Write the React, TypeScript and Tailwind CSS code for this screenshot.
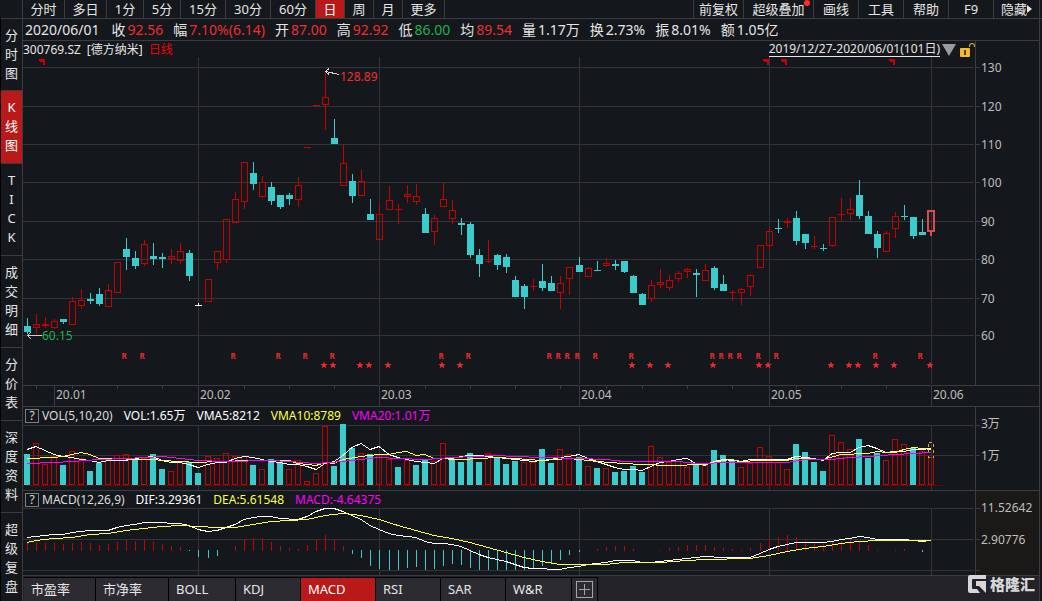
import { clsx } from 'clsx';

const PERIODS = [
  { label: '分时', width: 'w-[42px]' },
  { label: '多日', width: 'w-[42px]' },
  { label: '1分', width: 'w-[37px]' },
  { label: '5分', width: 'w-[37px]' },
  { label: '15分', width: 'w-[45px]' },
  { label: '30分', width: 'w-[45px]' },
  { label: '60分', width: 'w-[45px]' },
  { label: '日', width: 'w-[29px]' },
  { label: '周', width: 'w-[29px]' },
  { label: '月', width: 'w-[29px]' },
  { label: '更多', width: 'w-[42px]' },
];

const TOOLS = [
  { label: '前复权', width: 'w-[50px]' },
  { label: '超级叠加', width: 'w-[70px]', dot: true },
  { label: '画线', width: 'w-[45px]' },
  { label: '工具', width: 'w-[45px]' },
  { label: '帮助', width: 'w-[45px]' },
  { label: 'F9', width: 'w-[45px]' },
  { label: '隐藏', width: 'w-[46px]', arrow: true },
];

const SIDE_TABS = ['分时图', 'K线图', 'TICK', '成交明细', '分价表', '深度资料', '超级复盘'];

const QUOTE = [
  { label: '收', value: '92.56', color: 'text-[#f02d2d]' },
  { label: '幅', value: '7.10%(6.14)', color: 'text-[#f02d2d]' },
  { label: '开', value: '87.00', color: 'text-[#f02d2d]' },
  { label: '高', value: '92.92', color: 'text-[#f02d2d]' },
  { label: '低', value: '86.00', color: 'text-[#1fb14c]' },
  { label: '均', value: '89.54', color: 'text-[#f02d2d]' },
  { label: '量', value: '1.17万', color: 'text-[#e6e6e6]' },
  { label: '换', value: '2.73%', color: 'text-[#e6e6e6]' },
  { label: '振', value: '8.01%', color: 'text-[#e6e6e6]' },
  { label: '额', value: '1.05亿', color: 'text-[#e6e6e6]' },
];

const INDICATORS = [
  { label: '市盈率', width: 'w-[72px]' },
  { label: '市净率', width: 'w-[73px]' },
  { label: 'BOLL', width: 'w-[67px]' },
  { label: 'KDJ', width: 'w-[65px]' },
  { label: 'MACD', width: 'w-[75px]' },
  { label: 'RSI', width: 'w-[65px]' },
  { label: 'SAR', width: 'w-[65px]' },
  { label: 'W&R', width: 'w-[66px]' },
];

const UP = '#c80000';
const DOWN = '#3acccc';
const GRID = '#333437';
const FRAME = '#3b3c42';
const LABEL = '#bebebe';

// [color, high, body top, body bottom, low]
type Candle = ['r' | 'c' | 'w' | 'b', number, number, number, number];

const CANDLES: Candle[] = [
  ['c', 318, 326, 332, 334], ['r', 314, 324, 328, 334], ['r', 317, 324, 326, 328], ['r', 319, 321, 328, 329],
  ['c', 319, 319, 322, 324], ['r', 297, 301, 325, 325], ['r', 289, 300, 306, 309], ['c', 293, 299, 301, 304],
  ['c', 288, 294, 304, 306], ['r', 284, 290, 307, 307], ['r', 262, 262, 293, 293], ['c', 238, 249, 257, 270],
  ['c', 251, 258, 266, 269], ['r', 240, 244, 264, 266], ['c', 243, 256, 259, 265], ['c', 253, 257, 259, 268],
  ['r', 249, 256, 259, 264], ['r', 243, 251, 261, 264], ['c', 250, 253, 276, 281], ['w', 303, 305, 306, 306],
  ['r', 279, 279, 302, 302], ['r', 251, 251, 263, 270], ['r', 219, 219, 260, 263], ['r', 192, 199, 223, 223],
  ['r', 162, 162, 202, 209], ['c', 162, 173, 184, 190], ['r', 176, 182, 197, 198], ['c', 182, 187, 201, 205],
  ['c', 195, 195, 207, 209], ['c', 193, 195, 199, 205], ['r', 177, 185, 200, 207], ['r', 147, 147, 148, 148],
  ['r', 105, 105, 106, 106], ['r', 72, 97, 105, 130], ['c', 119, 138, 144, 144], ['r', 144, 163, 186, 186],
  ['c', 174, 181, 196, 203], ['r', 170, 181, 196, 196], ['c', 199, 214, 220, 220], ['r', 204, 214, 240, 240],
  ['r', 186, 200, 210, 210], ['r', 204, 209, 210, 224], ['r', 185, 194, 197, 203], ['r', 184, 196, 202, 205],
  ['c', 208, 214, 233, 233], ['r', 215, 218, 232, 245], ['r', 183, 199, 207, 207], ['r', 200, 210, 219, 224],
  ['c', 218, 223, 225, 235], ['c', 222, 224, 255, 258], ['c', 249, 255, 264, 277], ['r', 240, 261, 262, 263],
  ['c', 254, 255, 265, 270], ['c', 254, 257, 267, 273], ['c', 276, 280, 297, 297], ['c', 284, 286, 297, 309],
  ['r', 279, 286, 287, 291], ['c', 264, 281, 288, 291], ['c', 276, 283, 291, 291], ['r', 276, 283, 293, 309],
  ['r', 267, 267, 279, 295], ['c', 257, 265, 272, 272], ['r', 267, 268, 277, 277], ['c', 261, 270, 271, 271],
  ['r', 258, 263, 266, 267], ['c', 260, 264, 266, 270], ['c', 261, 261, 272, 273], ['c', 275, 276, 293, 293],
  ['c', 293, 294, 305, 305], ['r', 280, 285, 299, 302], ['r', 269, 282, 285, 288], ['r', 275, 280, 288, 291],
  ['r', 271, 273, 279, 282], ['r', 268, 269, 272, 278], ['c', 269, 273, 275, 297], ['r', 264, 270, 281, 281],
  ['c', 266, 268, 288, 290], ['c', 275, 284, 291, 291], ['r', 290, 292, 293, 301], ['r', 288, 289, 293, 305],
  ['r', 274, 275, 287, 296], ['r', 245, 245, 268, 268], ['r', 229, 231, 246, 250], ['c', 219, 228, 229, 233],
  ['r', 218, 221, 223, 228], ['c', 211, 218, 241, 245], ['c', 234, 234, 243, 249], ['r', 236, 246, 247, 249],
  ['c', 244, 248, 249, 251], ['r', 217, 217, 246, 247], ['r', 198, 214, 215, 222], ['r', 198, 209, 214, 220],
  ['c', 180, 195, 216, 219], ['c', 211, 216, 234, 234], ['c', 231, 234, 248, 258], ['r', 231, 233, 252, 252],
  ['r', 212, 216, 229, 238], ['c', 205, 216, 217, 220], ['c', 217, 217, 236, 239], ['c', 219, 232, 235, 235],
  ['b', 210, 210, 232, 236],
];

// top edge of each volume bar, negative when the day closed lower
const VOLUMES = [
  -454, 443, 464, 456, -465, 451, 458, -471, -463, 460, 455, 454, -458, 458, -454, -469, 471, 461, -462, -473,
  456, 458, 453, 456, 456, -465, 469, -459, -462, 469, 460, 481, 473, 426, -466, -424, -448, 453, -454, 454,
  459, -467, 460, -465, -460, 461, 443, -459, -462, -453, -462, 453, -458, -464, -461, 462, 462, -449, -463, 449,
  454, -457, 466, -468, 468, -472, -471, -466, -472, 446, 457, 462, 461, 467, -464, 465, -450, -455, -461, 467,
  463, 447, 456, 462, 469, -444, -452, -462, -471, 435, 442, 449, -439, -458, -453, 460, 439, 444, -448, 451,
  457,
];

// histogram heights above and below the zero line
const HISTOGRAM = [
  8, 9, 8, 8, 7, 8, 9, 8, 6, 7, 9, 11, 10, 11, 9, 7, 5, 4, -1, -7,
  -8, -6, 0, 5, 12, 13, 13, 9, 5, 3, 2, 6, 12, 16, 11, 5, -4, -8, -16, -19,
  -20, -20, -18, -17, -20, -19, -16, -14, -15, -18, -20, -20, -20, -20, -20, -20, -18, -16, -13, -10,
  -5, -2, 0, 2, 4, 5, 5, 2, 0, 0, 1, 3, 4, 6, 6, 6, 4, 3, 2, 1,
  3, 8, 12, 14, 16, 14, 12, 9, 7, 9, 10, 11, 9, 6, 1, 0, 1, 2, 0, -2,
  0,
];

const VMA5 =
  '27,449 36,446 45,450 54,454 63,456 72,457 81,459 90,460 99,462 108,460 126,460 135,458 144,457 153,456 162,460 171,462 180,462 189,464 198,467 208,464 217,462 226,462 235,458 244,456 253,457 262,459 271,461 280,462 289,464 298,464 307,466 316,469 325,463 334,461 343,455 352,447 361,443 370,449 379,446 389,454 398,457 407,459 416,461 425,462 434,463 443,458 452,458 461,456 470,455 479,455 488,456 497,457 506,458 515,459 524,460 533,461 542,460 551,459 560,457 569,456 579,454 588,458 597,461 606,464 615,467 624,469 633,469 642,470 651,466 660,462 669,461 678,459 687,458 696,463 705,465 714,461 723,459 732,460 741,461 750,459 787,459 796,456 805,457 814,458 823,460 832,453 841,452 850,452 859,447 868,445 877,448 886,452 895,451 904,451 913,449 922,449 931,448';
const VMA10 =
  '27,458 54,457 63,456 72,454 81,452 90,454 99,458 117,458 135,459 153,459 162,460 198,462 217,461 253,460 289,460 298,463 316,465 325,462 334,463 343,459 361,456 379,454 389,454 398,452 407,451 416,455 425,454 434,458 461,459 497,457 515,458 542,460 569,458 579,459 597,461 624,463 642,464 669,465 705,464 714,462 723,460 732,459 741,461 760,460 787,460 796,458 823,459 841,454 868,453 877,451 886,452 895,452 904,449 913,447 922,448 931,449';
const VMA20 =
  '27,463 54,462 72,461 99,459 126,458 162,456 180,458 198,460 225,461 271,460 289,461 316,463 343,461 361,459 379,457 398,458 425,459 452,457 497,455 515,456 542,457 579,458 606,459 624,461 678,461 696,463 732,462 787,462 805,459 832,459 850,457 868,456 895,454 913,453 931,452';
const DIF =
  '27,537 36,536 45,535 54,534 63,534 72,532 81,531 90,530 108,530 117,527 126,525 135,524 144,522 162,522 171,523 180,523 189,525 198,529 208,531 217,530 226,527 235,524 244,519 253,517 262,516 271,516 280,518 298,519 307,516 316,511 325,508 334,508 343,511 352,515 361,519 370,525 379,529 389,533 398,535 407,536 416,537 425,541 434,543 443,543 452,544 461,546 470,550 479,554 488,557 497,559 506,561 515,564 524,567 533,568 542,568 551,569 560,569 569,567 579,566 588,564 597,563 606,562 615,560 633,560 642,562 651,562 669,560 687,558 705,556 723,557 750,557 760,553 769,549 778,546 787,544 796,542 823,542 832,541 841,539 850,538 859,536 868,537 877,539 904,539 913,540 922,541 931,540';
const DEA =
  '27,542 36,540 54,538 72,537 90,534 108,533 126,530 144,528 162,526 180,525 198,526 217,527 235,527 253,524 271,521 289,520 307,519 325,515 343,513 361,515 379,519 398,525 416,530 434,535 452,538 470,542 488,547 506,552 524,557 542,561 560,564 579,564 606,564 624,562 660,562 687,560 705,559 750,558 769,555 787,551 805,548 823,546 841,543 859,541 877,540 931,540';

const PRICES = [
  { price: 130, y: 67 }, { price: 120, y: 106 }, { price: 110, y: 144 }, { price: 100, y: 182 },
  { price: 90, y: 221 }, { price: 80, y: 259 }, { price: 70, y: 298 }, { price: 60, y: 335 },
];
const MONTHS = [
  { label: '20.01', x: 54 }, { label: '20.02', x: 198 }, { label: '20.03', x: 379 },
  { label: '20.04', x: 579 }, { label: '20.05', x: 769 }, { label: '20.06', x: 931 },
];
const MONTH_LINES = [198, 379, 579, 769, 931];
const TICKS = [36, 72, 117, 162, 244, 289, 334, 425, 470, 515, 560, 606, 642, 687, 732, 796, 841, 886];
const REPORTS = [124, 142, 233, 278, 305, 332, 441, 468, 549, 558, 567, 577, 595, 631, 712, 721, 730, 739, 758, 776, 875, 920];
const STARS = [324, 333, 360, 369, 388, 442, 460, 632, 650, 668, 713, 759, 768, 831, 849, 858, 876, 894, 930];
const FLAGS = [39, 763, 781, 889];

// one day is 9px wide, with a spare pixel every twenty days or so
function dayX(i: number) {
  return 27 + 9 * i + [20, 40, 61, 81].filter((n) => i >= n).length;
}

function Bar({ x, y, w, h, color, hollow }: { x: number; y: number; w: number; h: number; color: string; hollow: boolean }) {
  if (!hollow || h < 3) return <rect x={x} y={y} width={w} height={h} fill={color} />;
  return <rect x={x + 0.5} y={y + 0.5} width={w - 1} height={h - 1} fill="none" stroke={color} />;
}

function PriceChart() {
  return (
    <svg
      className="block h-[350px] w-full"
      viewBox="23 57 1016 350"
      preserveAspectRatio="none"
      shapeRendering="crispEdges"
      role="img"
      aria-label="日线"
    >
      {PRICES.map((p) => (
        <g key={p.price}>
          <rect x={23} y={p.y} width={951} height={1} fill={GRID} />
          <rect x={975} y={p.y} width={5} height={1} fill={FRAME} />
          <text x={981} y={p.y + 5} fontSize={12} fill={LABEL}>
            {p.price}
          </text>
        </g>
      ))}
      {MONTH_LINES.map((x) => (
        <rect key={x} x={x} y={57} width={1} height={327} fill={GRID} />
      ))}
      <rect x={975} y={57} width={1} height={328} fill={FRAME} />
      <rect x={23} y={385} width={1016} height={1} fill={FRAME} />
      <rect x={23} y={406} width={1016} height={1} fill={FRAME} />
      {TICKS.map((x) => (
        <rect key={x} x={x} y={386} width={1} height={3} fill={FRAME} />
      ))}
      {MONTHS.map((m) => (
        <g key={m.label}>
          <rect x={m.x} y={386} width={1} height={20} fill={FRAME} />
          <text x={m.x + 2} y={399} fontSize={12} fill={LABEL}>
            {m.label}
          </text>
        </g>
      ))}

      {CANDLES.map(([kind, high, top, bottom, low], i) => {
        const x = dayX(i);
        if (kind === 'b') {
          return (
            <g key={i}>
              <rect x={x - 3} y={top + 1} width={6} height={bottom - top - 2} fill="none" stroke="#dc4b4b" strokeWidth={2} />
              <rect x={x - 1} y={bottom} width={2} height={low - bottom} fill="#dc4b4b" />
            </g>
          );
        }
        const color = kind === 'r' ? UP : kind === 'c' ? DOWN : '#ffffff';
        return (
          <g key={i}>
            <rect x={x} y={high} width={1} height={top - high} fill={color} />
            <Bar x={x - 3} y={top} w={7} h={bottom - top} color={color} hollow={kind === 'r'} />
            <rect x={x} y={bottom} width={1} height={low - bottom} fill={color} />
          </g>
        );
      })}

      {FLAGS.map((x) => (
        <path key={x} d={`M${x} 59h6v6h-2v-3h-2l-2-1z`} fill={UP} />
      ))}
      {REPORTS.map((x) => (
        <text key={x} x={x} y={359} fontSize={8} fontWeight={700} textAnchor="middle" fill="#f0282d">
          R
        </text>
      ))}
      {STARS.map((x) => (
        <path
          key={x}
          transform={`translate(${x} 365)`}
          d="M0-3.6 1-1.1 3.6-1 1.6.7 2.4 3.3 0 1.8-2.4 3.3-1.6.7-3.6-1-1-1.1z"
          fill="#f0282d"
          shapeRendering="auto"
        />
      ))}

      <path d="M339 74.500 326 71.500M329 68.500 325.500 71.500 329 74.500" fill="none" stroke="#d2d2d2" />
      <text x={340} y={81} fontSize={12} fill="#f02d2d">
        128.89
      </text>
      <path d="M42 335.500H28M31 332 27.500 335.500 31 339" fill="none" stroke="#d2d2d2" />
      <text x={42} y={340} fontSize={12} fill="#1fb14c">
        60.15
      </text>
    </svg>
  );
}

function VolumeChart() {
  return (
    <svg
      className="block h-[67px] w-full"
      viewBox="23 424 1016 67"
      preserveAspectRatio="none"
      shapeRendering="crispEdges"
      role="img"
      aria-label="VOL"
    >
      {[425, 455].map((y) => (
        <g key={y}>
          <rect x={23} y={y} width={951} height={1} fill={GRID} />
          <rect x={975} y={y} width={5} height={1} fill={FRAME} />
        </g>
      ))}
      {MONTH_LINES.map((x) => (
        <rect key={x} x={x} y={425} width={1} height={65} fill={GRID} />
      ))}
      <rect x={975} y={424} width={1} height={66} fill={FRAME} />
      <rect x={23} y={490} width={1016} height={1} fill={FRAME} />
      <text x={981} y={460} fontSize={12} fill={LABEL}>
        1万
      </text>
      {VOLUMES.map((v, i) => (
        <Bar
          key={i}
          x={dayX(i) - 3}
          y={Math.abs(v)}
          w={6}
          h={485 - Math.abs(v)}
          color={v > 0 ? UP : DOWN}
          hollow={v > 0}
        />
      ))}
      <path d="M23 485.500H944" stroke="#a00000" strokeDasharray="1 1" />
      <rect x={928.5} y={442.5} width={5} height={15} fill="none" stroke="#e6aa1e" strokeDasharray="3 3" />
      <g fill="none" transform="translate(0 .5)">
        <polyline points={VMA5} stroke="#ffffff" />
        <polyline points={VMA10} stroke="#ffff46" />
        <polyline points={VMA20} stroke="#ff00ff" />
      </g>
    </svg>
  );
}

function MacdChart() {
  return (
    <svg
      className="block h-[68px] w-full"
      viewBox="23 508 1016 68"
      preserveAspectRatio="none"
      shapeRendering="crispEdges"
      role="img"
      aria-label="MACD"
    >
      <rect x={976} y={508} width={63} height={67} fill="#1b1918" />
      {[508, 539, 570].map((y) => (
        <g key={y}>
          <rect x={23} y={y} width={951} height={1} fill={GRID} />
          <rect x={975} y={y} width={5} height={1} fill={FRAME} />
        </g>
      ))}
      {MONTH_LINES.map((x) => (
        <rect key={x} x={x} y={508} width={1} height={67} fill={GRID} />
      ))}
      <rect x={975} y={508} width={1} height={67} fill={FRAME} />
      <rect x={23} y={575} width={1016} height={1} fill={FRAME} />
      <text x={981} y={544} fontSize={12} fill={LABEL}>
        2.90776
      </text>
      {HISTOGRAM.map((h, i) => (
        <rect
          key={i}
          x={dayX(i)}
          y={h > 0 ? 551 - h : 550}
          width={1}
          height={Math.abs(h)}
          fill={h > 0 ? UP : DOWN}
        />
      ))}
      <g fill="none" transform="translate(0 .5)">
        <polyline points={DIF} stroke="#ffffff" />
        <polyline points={DEA} stroke="#ffff46" />
      </g>
    </svg>
  );
}

interface LegendProps {
  items: { text: string; color: string }[];
  axisLabel: string;
  active?: boolean;
}

function Legend({ items, axisLabel, active }: LegendProps) {
  return (
    <div className="flex h-[17px] text-xs leading-[18px]">
      <div className="flex min-w-0 flex-1 gap-[11px] whitespace-nowrap pl-[2px]">
        <div className="flex gap-[3px] text-[#dcdcdc]">
          <button
            type="button"
            aria-label="说明"
            className="mt-[2px] flex h-[14px] w-[14px] items-center justify-center border border-[#7d7d7d] leading-3"
          >
            ?
          </button>
          <span>{items[0].text}</span>
        </div>
        {items.slice(1).map((item) => (
          <span key={item.text} className={item.color}>
            {item.text}
          </span>
        ))}
      </div>
      <div
        className={clsx('w-[64px] whitespace-nowrap border-l border-[#3b3c42] pl-[5px]', active && 'bg-[#1b1918]')}
      >
        <div className="relative z-10 pt-2 text-[#bebebe]">{axisLabel}</div>
      </div>
    </div>
  );
}

function Toolbar() {
  return (
    <header className="flex h-[19px] border-b border-[#3b3c42] pl-[22px] text-[13px] leading-[18px]">
      <div className="flex border-l border-[#3b3c42]">
        {PERIODS.map((p) => (
          <button
            key={p.label}
            type="button"
            className={clsx('h-[18px] border-r border-[#3b3c42]', p.width, p.label === '日' && 'bg-[#b91919] text-white')}
          >
            {p.label}
          </button>
        ))}
      </div>
      <div className="ml-auto mr-[2px] flex border-r border-[#3b3c42]">
        {TOOLS.map((t) => (
          <button
            key={t.label}
            type="button"
            className={clsx(
              'relative flex h-[18px] items-center justify-center whitespace-nowrap border-l border-[#3b3c42]',
              t.width,
            )}
          >
            {t.label}
            {t.dot && <span className="absolute right-[3px] top-0 h-[6px] w-[6px] rounded-full bg-[#ff2d2d]" />}
            {t.arrow && (
              <svg className="h-2 w-[5px]" viewBox="0 0 5 8" fill="#e6e6e6">
                <path d="M0 0 5 4 0 8z" />
              </svg>
            )}
          </button>
        ))}
      </div>
    </header>
  );
}

function Sidebar() {
  return (
    <nav className="-mt-px flex w-[23px] shrink-0 flex-col border-l border-r border-l-black border-r-[#3b3c42] text-[13px] leading-[19px]">
      {SIDE_TABS.map((label, i) => (
        <button
          key={label}
          type="button"
          className={clsx(
            'flex flex-col items-center pt-[7px]',
            i === 0 && 'border-t border-[#3b3c42]',
            i < SIDE_TABS.length - 1 && 'border-b border-[#3b3c42]',
            i > 0 && i < SIDE_TABS.length - 1 && 'pb-2',
            i === 0 && 'pb-[7px]',
            label === 'K线图' && 'bg-[#b91919] text-white',
          )}
        >
          {label.split('').map((ch) => (
            <span key={ch}>{ch}</span>
          ))}
        </button>
      ))}
    </nav>
  );
}

function TitleRow() {
  return (
    <div className="flex h-4 text-xs leading-4">
      <div className="flex min-w-0 flex-1 items-center whitespace-nowrap pt-px">
        <span>300769.SZ</span>
        <span className="ml-[6px]">[德方纳米]</span>
        <span className="ml-[6px] text-[#f00000]">日线</span>
        <button type="button" className="ml-auto border-b border-[#e6e6e6] leading-[14px]">
          2019/12/27-2020/06/01(101日)
        </button>
        <svg className="ml-[2px] h-3 w-[14px]" viewBox="0 0 14 12" fill="#9b9b9b">
          <path d="M0 0h14L7 12z" />
        </svg>
        <svg className="ml-1 h-[14px] w-[15px]" viewBox="0 0 15 14">
          <path d="M9.500 4V3a2.500 2.500 0 0 1 5 0v1" fill="none" stroke="#d7a02d" strokeWidth="1.200" />
          <rect y="5" width="10" height="9" rx="1" fill="#f5b937" />
          <path d="M4 7h2v5H4z" fill="#5a4614" />
        </svg>
      </div>
      <div className="w-[64px] border-l border-[#3b3c42]" />
    </div>
  );
}

function IndicatorTabs() {
  return (
    <div className="flex flex-1 bg-[#222228] pl-px pt-px text-[13px] leading-5">
      <div className="flex h-6 border-t border-black">
        {INDICATORS.map((tab) => (
          <button
            key={tab.label}
            type="button"
            className={clsx(
              'border-r border-black pb-px pl-[7px] text-left',
              tab.width,
              tab.label === 'MACD' ? 'bg-[#b91919] text-white' : 'bg-[#2c2b31]',
            )}
          >
            {tab.label}
          </button>
        ))}
        <button
          type="button"
          aria-label="添加指标"
          className="flex w-[26px] items-center justify-center border-r border-black bg-[#2c2b31]"
        >
          <svg className="h-[17px] w-[17px]" viewBox="0 0 17 17" fill="none" stroke="#a5a5a5" shapeRendering="crispEdges">
            <path d="M.5.5h16v16H.5zM8.500 3v11M3 8.500h11" />
          </svg>
        </button>
      </div>
    </div>
  );
}

function Watermark() {
  return (
    <div className="absolute bottom-[7px] right-[7px] z-20 flex items-center gap-1 text-[15px] font-black leading-5 text-[#d7d7d9]">
      <svg className="h-[18px] w-[18px]" viewBox="0 0 18 18" fill="currentColor">
        <path d="M2 0h16v4H5a1 1 0 0 0-1 1v8a1 1 0 0 0 1 1h4l3 4H2a2 2 0 0 1-2-2V2a2 2 0 0 1 2-2z" />
        <path d="M8 6h10v12l-7-7H8z" />
      </svg>
      <span>格隆汇</span>
    </div>
  );
}

export default function App() {
  return (
    <div className="relative flex min-h-screen flex-col bg-[#14171b] font-['Noto_Sans','Noto_Sans_CJK_SC',sans-serif] text-[#e6e6e6]">
      <Toolbar />
      <div className="flex flex-1">
        <Sidebar />
        <main className="mr-[2px] flex min-w-0 flex-1 flex-col border-r border-[#3b3c42]">
          <div className="flex h-[22px] items-center gap-[10px] overflow-hidden whitespace-nowrap border-b border-[#3b3c42] pl-[2px] text-sm leading-5">
            <span className="pr-[2px]">2020/06/01</span>
            {QUOTE.map((q) => (
              <span key={q.label} className="flex gap-[2px]">
                <span>{q.label}</span>
                <span className={q.color}>{q.value}</span>
              </span>
            ))}
          </div>
          <TitleRow />
          <PriceChart />
          <Legend
            axisLabel="3万"
            items={[
              { text: 'VOL(5,10,20)', color: 'text-[#dcdcdc]' },
              { text: 'VOL:1.65万', color: 'text-white' },
              { text: 'VMA5:8212', color: 'text-white' },
              { text: 'VMA10:8789', color: 'text-[#ffff46]' },
              { text: 'VMA20:1.01万', color: 'text-[#ff00ff]' },
            ]}
          />
          <VolumeChart />
          <Legend
            active
            axisLabel="11.52642"
            items={[
              { text: 'MACD(12,26,9)', color: 'text-[#dcdcdc]' },
              { text: 'DIF:3.29361', color: 'text-white' },
              { text: 'DEA:5.61548', color: 'text-[#ffff46]' },
              { text: 'MACD:-4.64375', color: 'text-[#ff00ff]' },
            ]}
          />
          <MacdChart />
          <IndicatorTabs />
        </main>
      </div>
      <Watermark />
    </div>
  );
}
